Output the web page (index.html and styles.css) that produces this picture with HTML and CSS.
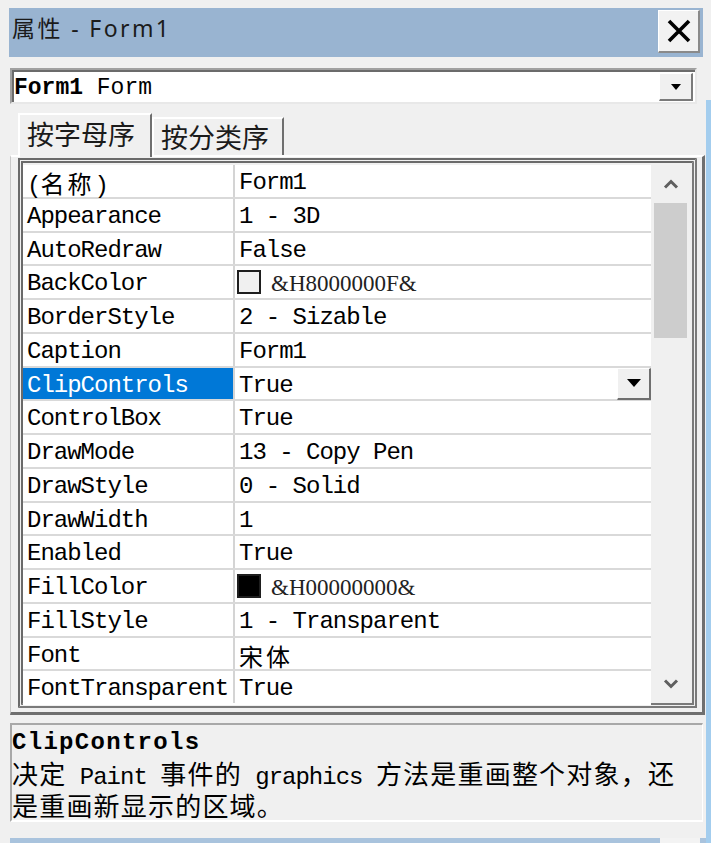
FILE: index.html
```html
<!DOCTYPE html>
<html lang="zh-CN">
<head>
<meta charset="utf-8">
<title>属性 - Form1</title>
<link rel="stylesheet" href="styles.css">
</head>
<body>
<div class="screen">
  <div class="window">
    <div class="titlebar">
      <span class="title">属性 - Form1</span>
      <div class="close">
        <svg width="26" height="26" viewBox="0 0 26 26"><path d="M3 3 L23 23 M23 3 L3 23" stroke="#000" stroke-width="3.6" fill="none"/></svg>
      </div>
    </div>
    <div class="combo">
      <span class="combo-text"><b>Form1</b> Form</span>
      <span class="dd-btn"><svg width="10" height="6" viewBox="0 0 10 6"><path d="M0 0 H10 L5 6 Z" fill="#000"/></svg></span>
    </div>
    <div class="tabs">
      <div class="tab active">按字母序</div>
      <div class="tab">按分类序</div>
    </div>
    <div class="tabpage">
      <div class="gridframe">
        <div class="props">
          <div class="row"><div class="name">(<span class="cjk">名称</span>)</div><div class="val">Form1</div></div>
          <div class="row"><div class="name">Appearance</div><div class="val">1 - 3D</div></div>
          <div class="row"><div class="name">AutoRedraw</div><div class="val">False</div></div>
          <div class="row"><div class="name">BackColor</div><div class="val"><span class="swatch light"></span><span class="hex">&amp;H8000000F&amp;</span></div></div>
          <div class="row"><div class="name">BorderStyle</div><div class="val">2 - Sizable</div></div>
          <div class="row"><div class="name">Caption</div><div class="val">Form1</div></div>
          <div class="row"><div class="name selected">ClipControls</div><div class="val">True<span class="row-btn"><svg width="14" height="8" viewBox="0 0 14 8"><path d="M0 0 H14 L7 8 Z" fill="#000"/></svg></span></div></div>
          <div class="row"><div class="name">ControlBox</div><div class="val">True</div></div>
          <div class="row"><div class="name">DrawMode</div><div class="val">13 - Copy Pen</div></div>
          <div class="row"><div class="name">DrawStyle</div><div class="val">0 - Solid</div></div>
          <div class="row"><div class="name">DrawWidth</div><div class="val">1</div></div>
          <div class="row"><div class="name">Enabled</div><div class="val">True</div></div>
          <div class="row"><div class="name">FillColor</div><div class="val"><span class="swatch dark"></span><span class="hex">&amp;H00000000&amp;</span></div></div>
          <div class="row"><div class="name">FillStyle</div><div class="val">1 - Transparent</div></div>
          <div class="row"><div class="name">Font</div><div class="val"><span class="cjk">宋体</span></div></div>
          <div class="row last"><div class="name">FontTransparent</div><div class="val">True</div></div>
        </div>
        <div class="scrollbar">
          <div class="sb-btn"><svg width="16" height="10" viewBox="0 0 16 10"><path d="M2 8.5 L8 2.5 L14 8.5" stroke="#5f5f5f" stroke-width="3" fill="none"/></svg></div>
          <div class="sb-thumb"></div>
          <div class="sb-track"></div>
          <div class="sb-btn"><svg width="16" height="10" viewBox="0 0 16 10"><path d="M2 1.5 L8 7.5 L14 1.5" stroke="#5f5f5f" stroke-width="3" fill="none"/></svg></div>
        </div>
      </div>
    </div>
    <div class="desc">
      <div class="desc-title">ClipControls</div>
      <div class="desc-text"><span class="cjk">决定</span> Paint <span class="cjk">事件的</span> graphics <span class="cjk">方法是重画整个对象，还</span><br><span class="cjk">是重画新显示的区域。</span></div>
    </div>
    <div class="nextbar"><div class="nextbtn"></div></div>
  </div>
  <div class="edge"></div>
</div>
</body>
</html>
```
FILE: styles.css
```css
html, body {
  margin: 0;
  padding: 0;
}
body {
  background: #f0f0f0;
  width: 711px;
  height: 843px;
  overflow: hidden;
  font-family: "Liberation Mono", "Noto Sans CJK SC", monospace;
  color: #000;
}
.screen {
  display: flex;
  height: 843px;
}
.window {
  margin-left: 8px;
  width: 698px;
  display: flex;
  flex-direction: column;
}
.window > * {
  flex-shrink: 0;
}
.edge {
  width: 5px;
  margin-top: 100px;
  background: #a3cdee;
}

/* title bar */
.titlebar {
  margin: 8px 3px 0 1px;
  height: 49px;
  background: #99b4d1;
  display: flex;
  align-items: center;
  justify-content: space-between;
}
.title {
  padding-left: 3px;
  font-family: "Noto Sans", "Noto Sans CJK SC", sans-serif;
  font-size: 23px;
  letter-spacing: 2.4px;
  color: #1b1b1b;
  line-height: 30px;
  margin-top: -9px;
}
.close {
  width: 42px;
  height: 43px;
  box-sizing: border-box;
  margin-right: 3px;
  margin-top: -2px;
  background: #f2f2f2;
  border-top: 1px solid #ffffff;
  border-left: 1px solid #ffffff;
  border-right: 2px solid #8a8a8a;
  border-bottom: 2px solid #8a8a8a;
  display: flex;
  align-items: center;
  justify-content: center;
}

/* combo */
.combo {
  margin: 11px 0 0 2px;
  width: 687px;
  height: 36px;
  box-sizing: border-box;
  background: #fff;
  border-top: 2px solid #a0a0a0;
  border-left: 2px solid #a0a0a0;
  border-right: 2px solid #e8e8e8;
  border-bottom: 2px solid #e8e8e8;
  box-shadow: inset 2px 2px 0 #6b6b6b;
  display: flex;
  align-items: center;
  justify-content: space-between;
  padding: 0 2px 0 2px;
}
.combo-text {
  font-size: 23px;
  line-height: 28px;
  white-space: pre;
  margin-top: 4px;
}
.combo-text b {
  font-weight: bold;
}
.dd-btn {
  width: 34px;
  height: 28px;
  box-sizing: border-box;
  margin-top: 2px;
  background: #f0f0f0;
  border-top: 1px solid #ffffff;
  border-left: 1px solid #ffffff;
  border-right: 2px solid #7a7a7a;
  border-bottom: 2px solid #7a7a7a;
  display: flex;
  align-items: center;
  justify-content: center;
}

/* tabs */
.tabs {
  margin-top: 9px;
  padding-left: 10px;
  height: 42px;
  display: flex;
  align-items: flex-end;
  position: relative;
  z-index: 1;
}
.tab {
  font-family: "Noto Sans CJK SC", sans-serif;
  font-size: 27px;
  line-height: 30px;
  color: #1b1b1b;
  box-sizing: border-box;
  display: flex;
  align-items: center;
  background: #f0f0f0;
  border-top: 2px solid #ffffff;
  border-left: 2px solid #ffffff;
  border-right: 2px solid #6f6f6f;
  width: 132px;
  height: 38px;
  padding-left: 7px;
  padding-bottom: 0;
}
.tab.active {
  width: 134px;
  height: 44px;
  margin-bottom: -2px;
  padding-bottom: 4px;
}

/* tab page */
.tabpage {
  margin-left: 2px;
  width: 695px;
  height: 560px;
  box-sizing: border-box;
  border-top: 2px solid #ffffff;
  border-left: 1px solid #c8c8c8;
  border-right: 3px solid #6f6f6f;
  border-bottom: 3px solid #6f6f6f;
  padding: 1px 0 0 7px;
}
.gridframe {
  width: 679px;
  height: 550px;
  box-sizing: border-box;
  border: 5px double #7a7a7a;
  border-top-color: #6a6a6a;
  border-left-color: #6a6a6a;
  background: #f0f0f0;
  display: flex;
  padding-top: 2px;
  gap: 2px;
}

/* property rows */
.props {
  width: 628px;
  display: flex;
  flex-direction: column;
}
.row {
  height: 33.75px;
  flex-shrink: 0;
  box-sizing: border-box;
  display: flex;
  background: #fff;
  border-bottom: 2px solid #d9d9d9;
  font-size: 24px;
  letter-spacing: -1px;
  line-height: 28px;
  white-space: pre;
}
.row.last {
  border-bottom-color: #fff;
}
.name {
  width: 212px;
  box-sizing: border-box;
  border-right: 2px solid #d4d4d4;
  padding: 4px 0 0 4px;
}
.name.selected {
  background: #0078d7;
  color: #fff;
}
.val {
  flex: 1;
  padding: 4px 0 0 4px;
  display: flex;
  align-items: flex-start;
}
.cjk {
  font-family: "Noto Sans CJK SC", sans-serif;
  font-size: 24px;
  letter-spacing: 3px;
}
.swatch {
  width: 24px;
  height: 24px;
  box-sizing: border-box;
  border: 2px solid #1e1e1e;
  margin: 0 10px 0 -2px;
  flex: none;
}
.swatch.light {
  background: #f0f0f0;
}
.swatch.dark {
  background: #000;
}
.hex {
  font-family: "Liberation Serif", serif;
  font-size: 23px;
  letter-spacing: 0;
  color: #222;
}
.row-btn {
  margin-left: auto;
  margin-top: -4px;
  width: 34px;
  height: 32px;
  box-sizing: border-box;
  background: #f0f0f0;
  border-top: 1px solid #ffffff;
  border-left: 1px solid #ffffff;
  border-right: 2px solid #6f6f6f;
  border-bottom: 2px solid #6f6f6f;
  display: flex;
  align-items: center;
  justify-content: center;
}

/* scrollbar */
.scrollbar {
  width: 35px;
  display: flex;
  flex-direction: column;
  background: #f0f0f0;
}
.sb-btn {
  height: 38px;
  flex-shrink: 0;
  display: flex;
  align-items: center;
  justify-content: center;
}
.sb-thumb {
  height: 135px;
  flex-shrink: 0;
  background: #cdcdcd;
  margin: 0 1px;
}
.sb-track {
  flex: 1;
}

/* description */
.desc {
  margin: 8px 0 0 2px;
  width: 693px;
  height: 99px;
  box-sizing: border-box;
  border-top: 2px solid #a8a8a8;
  border-left: 2px solid #a8a8a8;
  border-right: 1px solid #ffffff;
  border-bottom: 2px solid #ffffff;
  padding-top: 4px;
}
.desc-title {
  font-weight: bold;
  font-size: 24px;
  letter-spacing: 1.3px;
  line-height: 28px;
}
.desc-text {
  font-size: 24px;
  letter-spacing: -1px;
  line-height: 27px;
  white-space: pre;
  margin-top: 2px;
}
.desc-text .cjk {
  font-size: 26px;
  letter-spacing: 1.2px;
  line-height: 27px;
}

/* next window peek */
.nextbar {
  margin: 16px 0 0 2px;
  height: 12px;
  background: #a9c3dd;
  display: flex;
  justify-content: flex-end;
}
.nextbtn {
  width: 40px;
  height: 12px;
  margin-right: 6px;
  background: #f3f3f3;
}
```
